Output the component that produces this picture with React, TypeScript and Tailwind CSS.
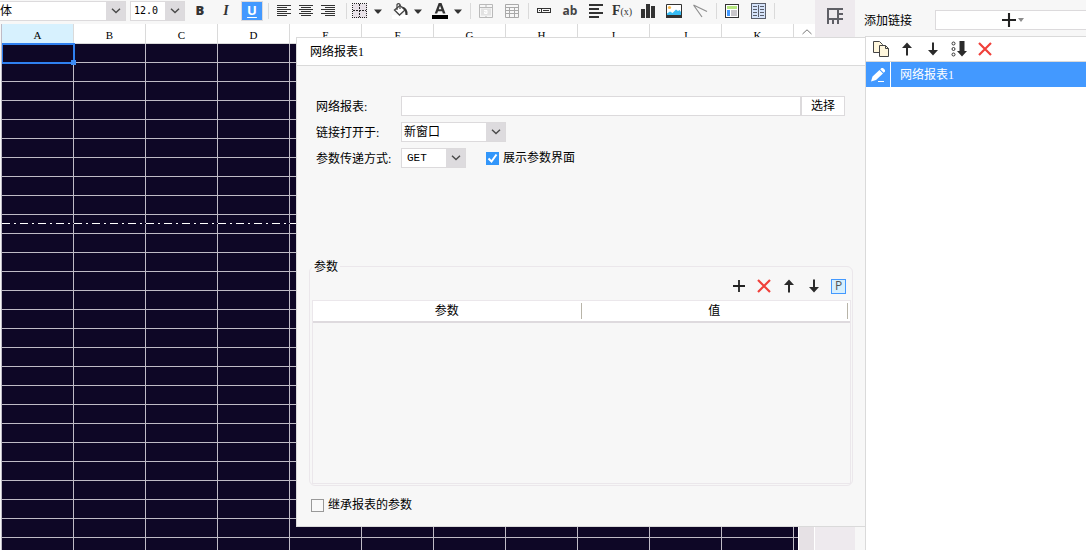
import { useState } from "react";
import type { ReactNode } from "react";

const columns = ["A", "B", "C", "D", "E", "F", "G", "H", "I", "J", "K"];
const rows = Array.from({ length: 60 }, (_, i) => i + 1);

/* ---------- icons ---------- */

const Chevron = () => (
  <svg width="10" height="6" viewBox="0 0 10 6" fill="none" stroke="#4a4a4a" strokeWidth="1.4">
    <path d="M1 0.8 5 4.6 9 0.8" />
  </svg>
);

const Caret = () => (
  <svg width="8" height="5" viewBox="0 0 8 5" fill="#333">
    <path d="M0 0.5h8L4.6 4.5H3.4z" />
  </svg>
);

const AlignIcon = ({ kind }: { kind: "left" | "center" | "right" }) => {
  const short = kind === "left" ? 0 : kind === "center" ? 2 : 4;
  return (
    <svg width="14" height="12" viewBox="0 0 14 12" fill="#333" shapeRendering="crispEdges">
      {[0, 2, 4, 6, 8, 10].map((y, i) => (
        <rect key={y} x={i % 2 ? short : 0} y={y} width={i % 2 ? 10 : 14} height="1" />
      ))}
    </svg>
  );
};

const BorderIcon = () => (
  <svg width="16" height="16" viewBox="0 0 16 16" shapeRendering="crispEdges">
    <rect x="1" y="1" width="14" height="14" fill="#e8e2e8" />
    <g stroke="#222" strokeDasharray="1 1">
      <path d="M0 .5h15M0 14.5h15M.5 0v15M14.5 0v15" />
    </g>
    <path d="M1 7.5h13M7.5 1v13" stroke="#222" strokeDasharray="2 1" />
  </svg>
);

const BucketIcon = () => (
  <svg width="16" height="16" viewBox="0 0 16 16">
    <rect y="12" width="16" height="4" fill="#fff" />
    <path d="M2.500 7 8 2.500l5 4.500-5.500 5z" fill="#fff" stroke="#444" strokeWidth="1.300" />
    <path d="M5 7V1.500Q6.500-.2 8 1.500V6" fill="none" stroke="#444" strokeWidth="1.200" />
    <path d="M10 3.500Q16 4.500 15.500 12H13.500L13 8z" fill="#333" />
  </svg>
);

const FontColorIcon = () => (
  <svg width="16" height="16" viewBox="0 0 16 16">
    <path d="M6.700 0h2.800l4 10.500h-2.600l-.8-2.300H6l-.8 2.300H2.700zM8 2.800 6.700 6.300h2.700z" fill="#333" />
    <rect y="12" width="16" height="4" />
  </svg>
);

const MergeIcon = () => (
  <svg width="14" height="14" viewBox="0 0 14 14" fill="none" stroke="#b9b9b9">
    <path d="M.5.5h13v13H.5zM.5 3.500h13M7 .5v3M7 12v1.500" />
    <rect x="2" y="4.500" width="10" height="7" fill="#e2e2e2" stroke="none" />
    <path d="M5 6.500h3v3H5.500V8H8" stroke="#fff" />
  </svg>
);

const GridIcon = () => (
  <svg width="14" height="14" viewBox="0 0 14 14" fill="none" stroke="#a9a9a9">
    <path d="M.5.5h13v13H.5zM.5 3.500h13M.5 6.500h13M.5 9.500h13M4.500 3.500v10M9.500 3.500v10" />
  </svg>
);

const WidgetIcon = () => (
  <svg width="14" height="6" viewBox="0 0 14 6" fill="none" stroke="#333" shapeRendering="crispEdges">
    <path d="M.5.5h13v4H.5zM4.500.5v4M6 2.500h6M2 2.500h1" />
  </svg>
);

const ParagraphIcon = () => (
  <svg width="14" height="14" viewBox="0 0 14 14" fill="#333" shapeRendering="crispEdges">
    <path d="M0 0h14v2H0zM0 4h10v2H0zM0 8h14v2H0zM0 12h10v2H0z" />
  </svg>
);

const ChartIcon = () => (
  <svg width="14" height="14" viewBox="0 0 14 14" fill="#333" shapeRendering="crispEdges">
    <path d="M0 5h4v9H0zM5 0h4v14H5zM10 2h4v12h-4z" />
  </svg>
);

const PictureIcon = () => (
  <svg width="16" height="14" viewBox="0 0 16 14">
    <path d="M.5.5h15v13H.5z" fill="#fff" stroke="#333" />
    <circle cx="3.500" cy="3.500" r="1.600" fill="#f9b94c" />
    <path d="M1 11V9.500L4 7.500l2.500 1.500L10 5.500l2 1.500 1.500-1 1.500 2v3z" fill="#37bdf5" />
    <path d="M0 11h16v3H0z" fill="#333" />
  </svg>
);

const SlopeIcon = () => (
  <svg width="15" height="14" viewBox="0 0 15 14" fill="none" stroke="#8f8f8f" strokeWidth="1.200">
    <path d="M.5 1 14 7.500M.5 1l8.500 12" />
  </svg>
);

const TemplateIcon = () => (
  <svg width="14" height="14" viewBox="0 0 14 14" shapeRendering="crispEdges">
    <path d="M.5.5h13v13H.5z" fill="#fff" stroke="#333" />
    <rect x="2" y="2" width="10" height="3" fill="#b5e77e" />
    <rect x="2" y="6" width="3" height="6" fill="#4399ff" />
    <rect x="6" y="6" width="6" height="6" fill="#c9c7cb" />
  </svg>
);

const BookIcon = () => (
  <svg width="15" height="16" viewBox="0 0 15 16" shapeRendering="crispEdges">
    <path d="M.5.5h14v15H.5z" fill="#d6e4fb" stroke="#5a5f6b" />
    <path d="M7.500 2v12M2 3.500h4M2 6.500h4M2 9.500h4M2 12.500h4M9 3.500h4M9 6.500h4M9 9.500h4M9 12.500h4" stroke="#5a5f6b" />
  </svg>
);

const FrameIcon = () => (
  <svg width="16" height="16" viewBox="0 0 16 16" fill="none" stroke="#5f5f66" strokeWidth="2">
    <path d="M1 16V1h15M11 1v15M1 11h15M6 11v5M11 6h5" />
  </svg>
);

const PlusIcon = ({ big }: { big?: boolean }) => (
  <svg width={big ? 14 : 12} height={big ? 14 : 12} viewBox="0 0 12 12" stroke="#222" strokeWidth="1.800">
    <path d="M6 0v12M0 6h12" />
  </svg>
);

const CloseIcon = () => (
  <svg width="14" height="14" viewBox="0 0 14 14" stroke="#f0403a" strokeWidth="2.200">
    <path d="m1 1 12 12M13 1 1 13" />
  </svg>
);

const UpIcon = () => (
  <svg width="10" height="14" viewBox="0 0 10 14" fill="#2b2b2b">
    <path d="M5 .5 10 6H6v7.500H4V6H0z" />
  </svg>
);

const DownIcon = () => (
  <svg width="10" height="14" viewBox="0 0 10 14" fill="#2b2b2b">
    <path d="M5 13.500 0 8h4V.5h2V8h4z" />
  </svg>
);

const CopyIcon = () => (
  <svg width="16" height="16" viewBox="0 0 16 16" fill="#fff7dd" stroke="#444">
    <path d="M.5.500h6l3 3v8h-9z" />
    <path d="M6.500 4.500h6l3 3v8h-9z" />
    <path d="M12.500 4.500v3h3" fill="none" />
  </svg>
);

const SortIcon = () => (
  <svg width="16" height="16" viewBox="0 0 16 16" fill="none" stroke="#333">
    <circle cx="2.500" cy="2.500" r="1.500" />
    <circle cx="2.500" cy="8" r="1.500" />
    <circle cx="2.500" cy="13.500" r="1.500" />
    <path d="M8.500 0h5v10H16l-5 5.500L6 10h2.500z" fill="#2b2b2b" stroke="none" />
  </svg>
);

const PencilIcon = () => (
  <svg width="14" height="14" viewBox="0 0 14 14" fill="#fff">
    <path d="M10.500 0h1.500l2 2v1.500l-1.300 1.300L9.200 1.300zM8.500 2l3.500 3.500-7 6.500L0 13.500 1.500 8.500z" />
    <path d="M7 13h6v1H7z" />
  </svg>
);

/* ---------- small parts ---------- */

interface ToolProps {
  label: string;
  className?: string;
  children: ReactNode;
}

const Tool = ({ label, className = "w-[26px]", children }: ToolProps) => (
  <button type="button" aria-label={label} className={`flex h-5 shrink-0 items-center justify-center ${className}`}>
    {children}
  </button>
);

const DropTool = ({ label, children }: ToolProps) => (
  <button type="button" aria-label={label} className="flex h-5 shrink-0 items-center gap-1.5">
    {children}
    <Caret />
  </button>
);

const Separator = () => <span className="ml-[3px] mr-0.5 h-4 w-px shrink-0 bg-[#dadada]" />;

interface SelectProps {
  id?: string;
  label?: string;
  options: string[];
  className: string;
  textClass?: string;
}

const Select = ({ id, label, options, className, textClass = "pl-0.5" }: SelectProps) => (
  <div className={`relative h-5 shrink-0 border border-[#dcdadc] bg-white ${className}`}>
    <select id={id} aria-label={label} className={`block h-full w-full appearance-none outline-none ${textClass}`}>
      {options.map((o) => (
        <option key={o}>{o}</option>
      ))}
    </select>
    <span className="pointer-events-none absolute inset-y-0 right-0 flex w-[19px] items-center justify-center bg-[#dddbde]">
      <Chevron />
    </span>
  </div>
);

const CheckBox = ({ checked, onChange }: { checked: boolean; onChange: (v: boolean) => void }) => (
  <span className="relative flex size-[13px]">
    <input
      type="checkbox"
      checked={checked}
      onChange={(e) => onChange(e.target.checked)}
      className="size-[13px] appearance-none border border-[#999] bg-[#f9f9f9] checked:border-[#3296fa] checked:bg-[#3296fa]"
    />
    {checked && (
      <svg className="pointer-events-none absolute inset-0" width="13" height="13" viewBox="0 0 13 13" fill="none" stroke="#fff" strokeWidth="2">
        <path d="M2.500 6.500 5.500 9.500 10.500 2.500" />
      </svg>
    )}
  </span>
);

/* ---------- sections ---------- */

const Toolbar = () => (
  <div className="flex h-6 shrink-0 items-center overflow-hidden bg-[#f7f7f7] pb-0.5">
    <Select label="字体" options={["体"]} className="w-[126px] border-l-0" textClass="pl-0" />
    <Select
      label="字号"
      options={["12.0"]}
      className="ml-1 mr-0.5 w-[55px]"
      textClass="pl-[3px] font-['DejaVu_Sans_Mono',monospace] text-[10px]"
    />
    <Tool label="加粗">
      <span className="font-['Open_Sans',sans-serif] text-[13px] font-extrabold text-[#333]">B</span>
    </Tool>
    <Tool label="斜体">
      <span className="font-['Liberation_Serif',serif] text-sm font-bold italic text-[#333]">I</span>
    </Tool>
    <Tool label="下划线" className="mx-0.5 w-[22px] border border-[#dcdadc] bg-[#4399ff]">
      <span className="font-['Open_Sans',sans-serif] text-[13px] font-bold text-white underline underline-offset-2">U</span>
    </Tool>
    <Separator />
    <div className="flex pl-0.5 pr-1">
      <Tool label="左对齐" className="w-[22px]"><AlignIcon kind="left" /></Tool>
      <Tool label="居中" className="w-[22px]"><AlignIcon kind="center" /></Tool>
      <Tool label="右对齐" className="w-[22px]"><AlignIcon kind="right" /></Tool>
    </div>
    <Separator />
    <div className="flex gap-2.5 pl-[3px] pr-[5px]">
      <DropTool label="边框"><BorderIcon /></DropTool>
      <DropTool label="背景色"><BucketIcon /></DropTool>
      <DropTool label="字体颜色"><FontColorIcon /></DropTool>
    </div>
    <Separator />
    <Tool label="合并单元格"><MergeIcon /></Tool>
    <Tool label="取消合并"><GridIcon /></Tool>
    <Separator />
    <Tool label="控件"><WidgetIcon /></Tool>
    <Tool label="文本">
      <span className="font-['Open_Sans',sans-serif] text-xs font-bold text-[#444]">ab</span>
    </Tool>
    <Tool label="富文本"><ParagraphIcon /></Tool>
    <Tool label="公式">
      <span className="font-['Liberation_Serif',serif] text-sm font-bold text-[#333]">
        F<span className="text-[10px] font-normal">(x)</span>
      </span>
    </Tool>
    <Tool label="图表"><ChartIcon /></Tool>
    <Tool label="图片"><PictureIcon /></Tool>
    <Tool label="斜线"><SlopeIcon /></Tool>
    <Separator />
    <Tool label="模板"><TemplateIcon /></Tool>
    <Tool label="子报表"><BookIcon /></Tool>
    <Separator />
  </div>
);

const Sheet = () => (
  <div className="flex min-h-0 flex-1">
    <div className="relative ml-px min-w-0 flex-1 overflow-hidden border-l border-[#bfbbc6] bg-[#0e0726]">
      <table className="w-full table-fixed border-separate border-spacing-0">
        <colgroup>
          {columns.map((c) => (
            <col key={c} className="w-[72px]" />
          ))}
          <col />
        </colgroup>
        <thead>
          <tr className="h-5">
            {columns.map((c) => (
              <th
                key={c}
                className={`h-5 border-b border-r border-[#dadada] p-0 pt-1 font-['Liberation_Serif',serif] text-[11px] leading-[15px] font-normal ${
                  c === "A" ? "bg-[#d7f1fe]" : "bg-white"
                }`}
              >
                {c}
              </th>
            ))}
            <th className="border-b border-[#dadada] bg-white p-0" />
          </tr>
        </thead>
        <tbody>
          {rows.map((r) => (
            <tr key={r}>
              {columns.map((c) => (
                <td key={c} className="h-[19px] border-b border-r border-[#bfbbc6] p-0" />
              ))}
              <td className="h-[19px] border-b border-[#bfbbc6] p-0" />
            </tr>
          ))}
        </tbody>
      </table>
      {/* selected cell */}
      <div className="absolute -left-px top-[19px] h-[21px] w-[74px] border-2 border-[#2f80f0]" />
      <div className="absolute left-[69px] top-9 size-[5px] bg-[#3d8bf5]" />
      {/* page break */}
      <div className="absolute inset-x-0 top-[199px] h-px bg-[repeating-linear-gradient(90deg,#fff_0px,#fff_8px,#0e0726_8px,#0e0726_12px,#fff_12px,#fff_14px,#0e0726_14px,#0e0726_18px)]" />
    </div>
    <div className="flex w-[17px] shrink-0 flex-col border-x border-white bg-[#e6e1e5]">
      <button type="button" aria-label="向上滚动" className="flex h-4 items-center justify-center bg-white">
        <svg width="10" height="6" viewBox="0 0 10 6" fill="none" stroke="#777">
          <path d="M.5 5 5 .8 9.500 5" />
        </svg>
      </button>
    </div>
  </div>
);

const LinkPanel = () => (
  <aside className="flex w-[231px] shrink-0 flex-col bg-[#f7f7f7] pl-[9px]">
    <div className="flex h-9 shrink-0 items-center gap-[23px] overflow-hidden pt-1">
      <span className="shrink-0 pt-0.5">添加链接</span>
      <button
        type="button"
        aria-label="添加链接"
        className="flex h-5 flex-1 items-center justify-center gap-0.5 border border-r-0 border-[#dcdadc] bg-white pl-1"
      >
        <PlusIcon big />
        <svg width="6" height="4" viewBox="0 0 6 4" fill="#8c8c8c">
          <path d="M0 0h6L3 4z" />
        </svg>
      </button>
    </div>
    <div className="ml-px flex-1 border-l border-t border-[#dadada] bg-white">
      <div className="flex h-[25px] items-center border-b border-[#dadada] pl-0.5">
        <Tool label="复制"><CopyIcon /></Tool>
        <Tool label="上移"><UpIcon /></Tool>
        <Tool label="下移"><DownIcon /></Tool>
        <Tool label="排序"><SortIcon /></Tool>
        <Tool label="删除"><CloseIcon /></Tool>
      </div>
      <div className="flex h-[25px] items-stretch bg-[#4399ff] text-white">
        <button type="button" aria-label="编辑" className="flex w-[25px] items-center justify-center border-r border-white">
          <PencilIcon />
        </button>
        <span className="flex items-center pl-[9px]">网络报表1</span>
      </div>
    </div>
  </aside>
);

const LinkDialog = () => {
  const [url, setUrl] = useState("");
  const [showParams, setShowParams] = useState(true);
  const [inherit, setInherit] = useState(false);

  return (
    <section className="absolute left-[296px] right-[220px] top-[37px] border border-[#dadada] bg-[#f7f7f7]">
      <h2 className="h-7 border-b border-[#dadada] bg-white pl-[13px] leading-7">网络报表1</h2>

      <div className="flex flex-col gap-1.5 pl-[19px] pr-5 pt-[30px]">
        <div className="flex items-center">
          <label htmlFor="report" className="w-[85px] pt-0.5">网络报表:</label>
          <input
            id="report"
            value={url}
            onChange={(e) => setUrl(e.target.value)}
            className="h-5 min-w-0 flex-1 border border-[#dcdadc] bg-white px-1 outline-none"
          />
          <button type="button" className="h-5 w-11 border border-[#dcdadc] bg-white leading-[18px]">选择</button>
        </div>
        <div className="flex items-center">
          <label htmlFor="target" className="w-[85px] pt-0.5">链接打开于:</label>
          <Select id="target" options={["新窗口", "当前窗口", "对话框"]} className="w-[105px]" />
        </div>
        <div className="flex items-center">
          <label htmlFor="method" className="w-[85px] pt-0.5">参数传递方式:</label>
          <Select
            id="method"
            options={["GET", "POST"]}
            className="w-[65px]"
            textClass="pl-[5px] font-['Liberation_Mono',monospace] text-[11px]"
          />
          <label className="ml-5 flex items-center gap-1">
            <CheckBox checked={showParams} onChange={setShowParams} />
            展示参数界面
          </label>
        </div>
      </div>

      <fieldset className="mx-3 mt-[90px] rounded-md border border-[#ebe7eb] pb-px pl-0.5 pr-px">
        <legend className="px-0.5 pt-0.5 leading-[14px]">参数</legend>
        <div className="flex h-[26px] items-center justify-end pb-0.5">
          <Tool label="添加参数" className="w-[25px]"><PlusIcon /></Tool>
          <Tool label="删除参数" className="w-[25px]"><CloseIcon /></Tool>
          <Tool label="参数上移" className="w-[25px]"><UpIcon /></Tool>
          <Tool label="参数下移" className="w-[25px]"><DownIcon /></Tool>
          <Tool label="参数类型" className="w-[25px]">
            <span className="flex size-[15px] items-center justify-center border border-[#4399ff] bg-[#d7effd] font-['Open_Sans',sans-serif] text-xs leading-none text-[#555]">
              P
            </span>
          </Tool>
        </div>
        <div className="h-[184px] border border-[#ebe7eb]">
          <table className="w-full table-fixed border-separate border-spacing-0 border-b-2 border-[#dedade] bg-white">
            <thead>
              <tr>
                <th className="p-0 py-0.5 font-normal">
                  <span className="block h-4 border-r border-[#b8b4a8] leading-4">参数</span>
                </th>
                <th className="p-0 py-0.5 pr-0.5 font-normal">
                  <span className="block h-4 border-r border-[#b8b4a8] leading-4">值</span>
                </th>
              </tr>
            </thead>
          </table>
        </div>
      </fieldset>

      <label className="ml-3.5 mt-2.5 mb-3 flex h-[18px] w-fit items-center gap-1">
        <CheckBox checked={inherit} onChange={setInherit} />
        继承报表的参数
      </label>
    </section>
  );
};

const App = () => (
  <div className="relative flex h-screen overflow-hidden bg-[#f7f7f7] font-['Liberation_Serif','Noto_Sans_CJK_SC',sans-serif] text-xs text-black">
    <main className="flex min-w-0 flex-1 flex-col">
      <Toolbar />
      <Sheet />
    </main>
    <div className="flex w-10 shrink-0 justify-center bg-[#eeeaee] pt-2">
      <button type="button" aria-label="单元格属性" className="size-4">
        <FrameIcon />
      </button>
    </div>
    <LinkPanel />
    <LinkDialog />
  </div>
);

export default App;
